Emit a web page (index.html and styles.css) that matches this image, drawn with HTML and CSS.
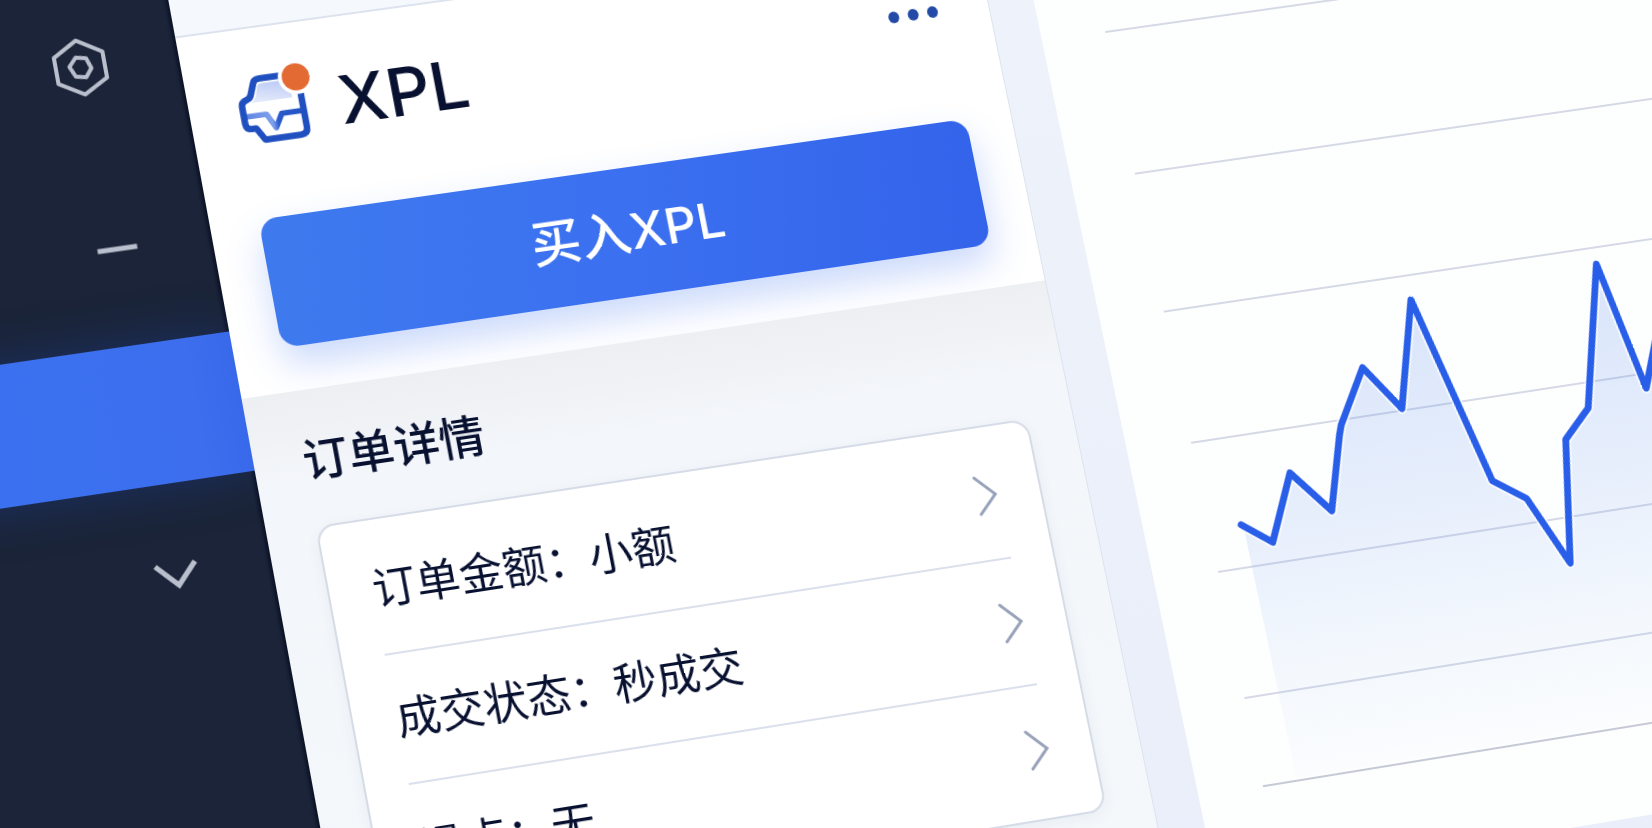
FILE: index.html
```html
<!DOCTYPE html>
<html lang="zh-CN">
<head>
<meta charset="utf-8">
<title>XPL</title>
<link rel="stylesheet" href="styles.css">
</head>
<body>
<div class="scene">
  <nav class="sidebar">
    <button class="nav-item nav-item-home" aria-label="设置">
      <svg class="nav-icon" viewBox="-32 -32 64 64">
        <path d="M0 -27.500L24 -13V13.500L0 27.500L-24 13.500V-13Z"/>
        <path d="M-3 -10.500L7 -8.500L10.500 2L4 10.500L-6 8.500L-10.500 -2Z"/>
      </svg>
    </button>
    <button class="nav-item nav-item-collapse" aria-label="收起">
      <svg class="nav-icon" viewBox="-32 -32 64 64"><path class="thick" d="M-19.500 0H19.500"/></svg>
    </button>
    <button class="nav-item nav-item-active" aria-label="当前"></button>
    <button class="nav-item nav-item-more" aria-label="展开">
      <svg class="nav-icon" viewBox="-32 -32 64 64"><path class="thick" d="M-19 -9L1 12L20 -9"/></svg>
    </button>
  </nav>

  <main class="order">
    <div class="strip"></div>
    <header class="head">
      <div class="title-row">
        <svg class="logo" viewBox="0 0 72 72">
          <defs>
            <linearGradient id="lid" x1="0.800" y1="0" x2="0.300" y2="1">
              <stop offset="0" stop-color="#bccbf6"/>
              <stop offset="1" stop-color="#e3e9fb"/>
            </linearGradient>
            <linearGradient id="tray" x1="0" y1="0" x2="1" y2="0">
              <stop offset="0" stop-color="#5f86e2"/>
              <stop offset="0.450" stop-color="#7f9fec"/>
              <stop offset="0.550" stop-color="#2b5bcb"/>
              <stop offset="1" stop-color="#2453c4"/>
            </linearGradient>
          </defs>
          <path d="M27 9.500H55V28H13.500Q19 26 21 18L23 12Q24 9.500 27 9.500Z" fill="url(#lid)"/>
          <path d="M7 41.300H27L34 56L42 42.500H62" fill="none" stroke="url(#tray)" stroke-width="5.500" stroke-linejoin="round"/>
          <path d="M46.500 4.500H26Q20.500 4.500 19.300 9L15 20Q13.800 23 11 24L7.500 25.500Q4.500 27 4.500 31V48Q4.500 54 10 54H14.500L21.500 66.500H57Q64 66.500 64 59.500V25" fill="none" stroke="#2050bf" stroke-width="6.500" stroke-linejoin="round"/>
          <circle cx="62" cy="8" r="17.500" fill="#fff"/>
          <circle cx="62" cy="8" r="13.700" fill="#e36a33"/>
        </svg>
        <h1 class="title">XPL</h1>
        <button class="dots" aria-label="更多"><i></i><i></i><i></i></button>
      </div>
      <button class="buy">买入XPL</button>
    </header>
    <section class="details">
      <h2 class="details-title">订单详情</h2>
      <div class="card">
        <button class="row">订单金额：小额<svg class="chev" viewBox="0 0 24 44"><path d="M3 3L21 22L3 40"/></svg></button>
        <button class="row">成交状态：秒成交<svg class="chev" viewBox="0 0 24 44"><path d="M3 3L21 22L3 40"/></svg></button>
        <button class="row">滑点：无<svg class="chev" viewBox="0 0 24 44"><path d="M3 3L21 22L3 40"/></svg></button>
      </div>
    </section>
  </main>

  <section class="chart-panel">
    <svg class="chart" role="img" aria-label="价格走势">
      <defs>
        <linearGradient id="area" gradientUnits="userSpaceOnUse" x1="0" y1="500" x2="0" y2="970">
          <stop offset="0" stop-color="#3b72ea" stop-opacity="0.190"/>
          <stop offset="0.450" stop-color="#4f86ee" stop-opacity="0.130"/>
          <stop offset="1" stop-color="#7fb2f5" stop-opacity="0.020"/>
        </linearGradient>
      </defs>
      <g class="grid">
        <line x1="66" y1="196" x2="100%" y2="196"/>
        <line x1="66" y1="344" x2="100%" y2="344"/>
        <line x1="66" y1="487" x2="100%" y2="487"/>
        <line x1="66" y1="622" x2="100%" y2="622"/>
        <line x1="66" y1="754" x2="100%" y2="754"/>
        <line x1="66" y1="882" x2="100%" y2="882"/>
        <line class="axis" x1="66" y1="971" x2="100%" y2="971"/>
      </g>
      <path fill="url(#area)" d="M101 711L128 734L159 666L194 713L218 637L221 629L255 572L286 622L319 511L362 705L393 728L424 800L446 676L476 648L517 503L540 637L582 541L620 600V968H101Z"/>
      <path class="halo" d="M99 711L127 733L159 667L193 711L217 637L221 627L255 573L286 620L319 512L362 706L393 729L423 800L446 676L476 648L517 504L540 637L582 541L620 600"/>
      <path class="price" d="M99 711L127 733L159 667L193 711L217 637L221 627L255 573L286 620L319 512L362 706L393 729L423 800L446 676L476 648L517 504L540 637L582 541L620 600"/>
    </svg>
  </section>
</div>
</body>
</html>
```
FILE: styles.css
```css
* {
  box-sizing: border-box;
}

body {
  margin: 0;
  height: 100vh;
  overflow: hidden;
  background: #edf1fa;
  font-family: Inter, "Liberation Sans", "Noto Sans CJK SC", sans-serif;
  color: #081130;
}

button {
  margin: 0;
  padding: 0;
  border: 0;
  background: none;
  color: inherit;
  font: inherit;
  cursor: pointer;
}

h1,
h2 {
  margin: 0;
}

/* The whole interface is one plane, seen tilted. */
.scene {
  display: flex;
  width: 115vw;
  min-height: 1120px;
  background: linear-gradient(#eff3fa, #e9eefa);
  transform-origin: 0 0;
  transform: matrix3d(1.00998, -0.1369, 0, 0.00002798, 0.17441, 0.97424, 0, -0.00002652, 0, 0, 1, 0, 175, 36.5, 0, 1) translate(-310px, -70px);
}

.sidebar {
  display: flex;
  flex-direction: column;
  flex: none;
  width: 310px;
  background: #1b2438;
  box-shadow: inset -3px 0 3px #0d1428;
}

.nav-item {
  display: flex;
  align-items: center;
  justify-content: center;
  padding-left: 124px;
}

.nav-item-home {
  height: 175px;
  padding-left: 116px;
}

.nav-item-collapse {
  height: 195px;
}

.nav-item-active {
  height: 140px;
  background: linear-gradient(90deg, #3a72f0, #3c6eee 85%, #3869ea);
  box-shadow: 0 0 50px rgba(26, 64, 150, 0.45);
}

.nav-item-more {
  height: 176px;
}

.nav-icon {
  width: 64px;
  height: 64px;
  fill: none;
  stroke: #b9bfcc;
  stroke-width: 4;
  stroke-linejoin: round;
}

.nav-icon .thick {
  stroke-width: 5;
  stroke-linejoin: miter;
}

.order {
  display: flex;
  flex-direction: column;
  flex: none;
  width: 812px;
  background: #fff;
  border-right: 1px solid #dce3ef;
}

.strip {
  height: 72px;
  background: #f5f8fc;
  border-bottom: 2px solid #dde3ee;
}

.head {
  padding: 47px 46px 44px 48px;
}

.title-row {
  display: flex;
  align-items: center;
  gap: 28px;
  height: 72px;
  margin-bottom: 73px;
}

.logo {
  flex: none;
  width: 72px;
  height: 72px;
  overflow: visible;
}

.title {
  padding-top: 2px;
  font-size: 68px;
  font-weight: 500;
  line-height: 72px;
}

.dots {
  display: flex;
  gap: 9px;
  margin-left: auto;
  padding: 4px 6px 12px;
}

.dots i {
  width: 11px;
  height: 12px;
  border-radius: 50%;
  background: #234aa6;
}

.buy {
  display: block;
  width: 100%;
  height: 130px;
  border-radius: 18px;
  background: linear-gradient(100deg, #3e7aee, #3b70f0 50%, #3363ea);
  box-shadow: 0 18px 36px rgba(70, 120, 240, 0.28);
  color: #fff;
  font-size: 50px;
  font-weight: 500;
  line-height: 60px;
}

.details {
  flex: 1;
  padding: 37px 46px 60px 48px;
  background: linear-gradient(#edeff2, #f3f6fa 90px, #f4f8fb);
}

.details-title {
  font-size: 45px;
  font-weight: 500;
  line-height: 68px;
}

.card {
  margin-top: 30px;
  padding: 4px 42px 5px;
  border: 2px solid #d6dce7;
  border-radius: 18px;
  background: #fff;
  box-shadow: 0 4px 14px rgba(60, 80, 130, 0.06);
}

.row {
  display: flex;
  align-items: center;
  justify-content: space-between;
  width: 100%;
  height: 128px;
  font-size: 43px;
  line-height: 64px;
}

.row + .row {
  border-top: 2px solid #dae0ec;
}

.chev {
  width: 24px;
  height: 44px;
  fill: none;
  stroke: #97a1b9;
  stroke-width: 3;
  stroke-linecap: round;
}

.chart-panel {
  flex: 1;
  min-width: 0;
  height: 1061px;
  margin-left: 46px;
  background: #fdfefe;
}

.chart {
  display: block;
  width: 100%;
  height: 1061px;
}

.grid line {
  stroke: #d5d9e6;
  stroke-width: 2;
}

.grid .axis {
  stroke: #c6cad6;
}

.halo,
.price {
  fill: none;
  stroke-linecap: round;
  stroke-linejoin: round;
}

.halo {
  stroke: rgba(255, 255, 255, 0.7);
  stroke-width: 11;
}

.price {
  stroke: #285ee8;
  stroke-width: 7;
}
```
